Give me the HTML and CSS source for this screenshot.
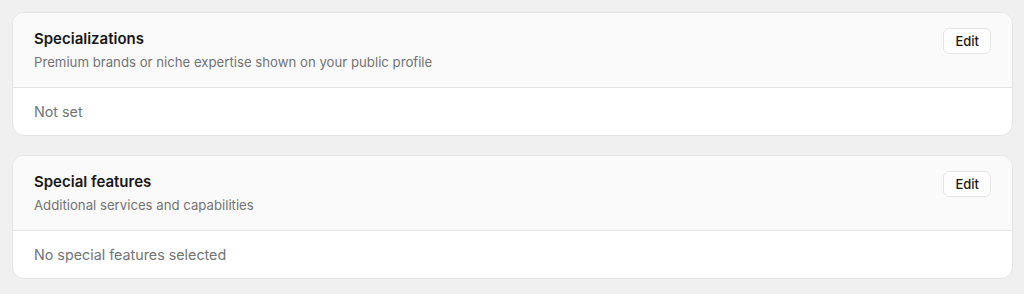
FILE: index.html
```html
<!DOCTYPE html>
<html lang="en">
<head>
<meta charset="utf-8">
<link rel="stylesheet" href="styles.css">
</head>
<body>
<main class="page">
  <section class="card">
    <header class="card-head">
      <div class="head-text">
        <h2 class="title">Specializations</h2>
        <p class="subtitle">Premium brands or niche expertise shown on your public profile</p>
      </div>
      <button class="edit-btn">Edit</button>
    </header>
    <div class="card-body">Not set</div>
  </section>
  <section class="card">
    <header class="card-head">
      <div class="head-text">
        <h2 class="title">Special features</h2>
        <p class="subtitle">Additional services and capabilities</p>
      </div>
      <button class="edit-btn">Edit</button>
    </header>
    <div class="card-body">No special features selected</div>
  </section>
</main>
</body>
</html>
```
FILE: styles.css
```css
* { box-sizing: border-box; }
html, body { margin: 0; padding: 0; }
body {
  background: #f0f0f0;
  font-family: Inter, "Noto Sans", sans-serif;
  color: #171717;
}
.page {
  padding: 12px 11px 12px 12px;
  display: flex;
  flex-direction: column;
  gap: 19.5px;
}
.card {
  background: #ffffff;
  border: 1px solid #e5e5e5;
  border-radius: 12px;
  overflow: hidden;
}
.card-head {
  background: #fafafa;
  border-bottom: 1px solid #e5e5e5;
  display: flex;
  justify-content: space-between;
  align-items: flex-start;
  padding: 15px 21px 14.5px 21px;
}
.title {
  margin: 0;
  font-size: 15px;
  font-weight: 600;
  line-height: 22px;
  color: #171717;
}
.subtitle {
  margin: 2px 0 0;
  font-size: 13.2px;
  line-height: 20px;
  color: #737373;
}
.edit-btn {
  font-family: inherit;
  font-size: 13px;
  font-weight: 500;
  color: #171717;
  background: #ffffff;
  border: 1px solid #e5e5e5;
  border-radius: 6px;
  height: 26px;
  padding: 0 11px;
  cursor: pointer;
}
.card-body {
  padding: 14.5px 21px 12.5px;
  font-size: 14.3px;
  line-height: 20px;
  color: #737373;
}
```
